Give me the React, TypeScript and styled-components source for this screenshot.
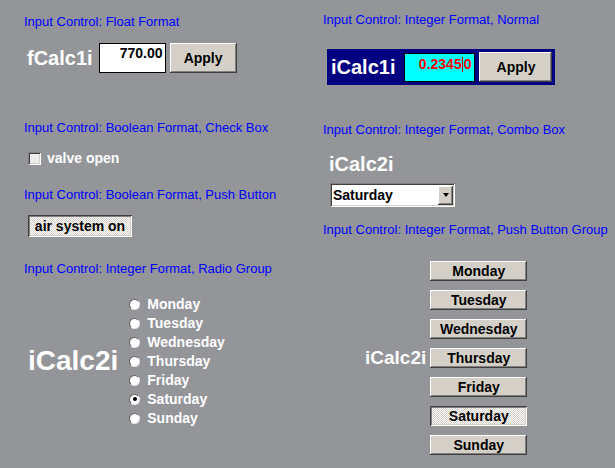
import styled, { createGlobalStyle, css } from "styled-components";

const GlobalStyle = createGlobalStyle`
  html, body {
    margin: 0;
    padding: 0;
    background: #939599;
  }
  body {
    font-family: "Liberation Sans", Arial, sans-serif;
    overflow: hidden;
  }
`;

const raised = css`
  background: #d4d0c8;
  box-shadow: inset -1px -1px #404040, inset 1px 1px #ffffff,
    inset -2px -2px #808080, inset 2px 2px #d4d0c8;
`;

const pressed = css`
  background-color: #ffffff;
  background-image: repeating-conic-gradient(#d4d0c8 0 25%, #ffffff 0 50%);
  background-size: 2px 2px;
  box-shadow: inset 1px 1px #404040, inset -1px -1px #ffffff,
    inset 2px 2px #808080, inset -2px -2px #d4d0c8;
`;

const sunken = css`
  box-shadow: inset 1px 1px #808080, inset -1px -1px #ffffff,
    inset 2px 2px #404040, inset -2px -2px #d4d0c8;
`;

const Page = styled.div`
  display: flex;
  width: 615px;
  height: 468px;
  background: #939599;
`;

const LeftColumn = styled.div`
  display: flex;
  flex-direction: column;
  align-items: flex-start;
  width: 323px;
  padding-left: 24px;
  box-sizing: border-box;
`;

const RightColumn = styled.div`
  display: flex;
  flex-direction: column;
  align-items: flex-start;
`;

const Caption = styled.div<{ $top: number }>`
  margin-top: ${(p) => p.$top}px;
  font-size: 13px;
  line-height: 15px;
  color: #0000ff;
  white-space: nowrap;
`;

const CalcName = styled.span<{ $size: number }>`
  font-size: ${(p) => p.$size}px;
  line-height: ${(p) => Math.round(p.$size * 1.15)}px;
  font-weight: bold;
  color: #ffffff;
  white-space: nowrap;
`;

const FloatRow = styled.div`
  display: flex;
  align-items: center;
  margin: 14px 0 0 3px;
  height: 30px;
  ${CalcName} {
    margin-right: 6px;
  }
`;

const ValueBox = styled.div<{ $cyan?: boolean }>`
  box-sizing: border-box;
  width: ${(p) => (p.$cyan ? 71 : 67)}px;
  height: ${(p) => (p.$cyan ? 29 : 30)}px;
  border: 1px solid #000000;
  background: ${(p) => (p.$cyan ? "#00ffff" : "#ffffff")};
  color: ${(p) => (p.$cyan ? "#ff0000" : "#000000")};
  padding: ${(p) => (p.$cyan ? "2px 3px 0 0" : "1px 2px 0 0")};
  font-size: 14px;
  line-height: 16px;
  font-weight: bold;
  text-align: right;
  white-space: nowrap;
`;

const Caret = styled.span`
  display: inline-block;
  width: 1px;
  height: 15px;
  margin: 0 1px 0 0;
  vertical-align: -3px;
  background: #b00000;
`;

const ApplyButton = styled.div<{ $width: number }>`
  ${raised};
  box-sizing: border-box;
  width: ${(p) => p.$width}px;
  height: 30px;
  margin-left: 4px;
  display: flex;
  align-items: center;
  justify-content: center;
  font-size: 14px;
  font-weight: bold;
  color: #000000;
`;

const CheckRow = styled.div`
  display: flex;
  align-items: center;
  gap: 6px;
  height: 16px;
  margin: 15px 0 0 4px;
`;

const CheckBox = styled.div`
  ${sunken};
  width: 13px;
  height: 13px;
  background: #ececec;
`;

const WhiteLabel = styled.span`
  font-size: 14px;
  line-height: 16px;
  font-weight: bold;
  color: #ffffff;
  white-space: nowrap;
`;

const ToggleButton = styled.div`
  ${pressed};
  box-sizing: border-box;
  width: 104px;
  height: 22px;
  margin: 13px 0 0 4px;
  display: flex;
  align-items: center;
  justify-content: center;
  font-size: 14px;
  font-weight: bold;
  color: #000000;
`;

const RadioSection = styled.div`
  display: flex;
  align-items: center;
  margin: 19px 0 0 4px;
  ${CalcName} {
    margin-right: 11px;
  }
`;

const RadioList = styled.div`
  display: flex;
  flex-direction: column;
`;

const RadioRow = styled.div`
  display: flex;
  align-items: center;
  gap: 7px;
  height: 19px;
`;

const RadioDot = styled.div<{ $checked?: boolean }>`
  position: relative;
  box-sizing: border-box;
  width: 11px;
  height: 11px;
  border-radius: 50%;
  background: #ffffff;
  border: 1px solid;
  border-color: #606060 #e8e8e8 #e8e8e8 #606060;
  &::after {
    content: "";
    display: ${(p) => (p.$checked ? "block" : "none")};
    position: absolute;
    left: 2.5px;
    top: 2.5px;
    width: 4px;
    height: 4px;
    border-radius: 50%;
    background: #000000;
  }
`;

const NavyPanel = styled.div`
  display: flex;
  align-items: center;
  box-sizing: border-box;
  height: 36px;
  margin: 22px 0 0 4px;
  padding: 0 3px 0 4px;
  background: #000080;
  ${CalcName} {
    margin-right: 9px;
  }
`;

const ComboName = styled(CalcName)`
  margin: 16px 0 0 6px;
`;

const Combo = styled.div`
  ${sunken};
  position: relative;
  box-sizing: border-box;
  width: 125px;
  height: 24px;
  margin: 7px 0 0 7px;
  padding: 0 2px 0 3px;
  display: flex;
  align-items: center;
  justify-content: space-between;
  background: #ffffff;
  font-size: 14px;
  font-weight: bold;
  color: #000000;
`;

const ComboArrow = styled.div`
  ${raised};
  box-sizing: border-box;
  width: 15px;
  height: 19px;
  display: flex;
  align-items: center;
  justify-content: center;
  &::before {
    content: "";
    border-left: 3.5px solid transparent;
    border-right: 3.5px solid transparent;
    border-top: 4px solid #000000;
  }
`;

const PushSection = styled.div`
  display: flex;
  align-items: center;
  gap: 4px;
  margin: 24.5px 0 0 42px;
`;

const PushList = styled.div`
  display: flex;
  flex-direction: column;
  gap: 9px;
`;

const DayButton = styled.div<{ $down?: boolean }>`
  ${(p) => (p.$down ? pressed : raised)};
  box-sizing: border-box;
  width: 97px;
  height: 20px;
  display: flex;
  align-items: center;
  justify-content: center;
  font-size: 14px;
  font-weight: bold;
  color: #000000;
`;

const days = ["Monday", "Tuesday", "Wednesday", "Thursday", "Friday", "Saturday", "Sunday"];
const selectedDay = "Saturday";

export default function App() {
  return (
    <>
      <GlobalStyle />
      <Page>
        <LeftColumn>
          <Caption $top={14}>Input Control: Float Format</Caption>
          <FloatRow>
            <CalcName $size={20}>fCalc1i</CalcName>
            <ValueBox>770.00</ValueBox>
            <ApplyButton $width={67}>Apply</ApplyButton>
          </FloatRow>

          <Caption $top={47}>Input Control: Boolean Format, Check Box</Caption>
          <CheckRow>
            <CheckBox />
            <WhiteLabel>valve open</WhiteLabel>
          </CheckRow>

          <Caption $top={21}>Input Control: Boolean Format, Push Button</Caption>
          <ToggleButton>air system on</ToggleButton>

          <Caption $top={23.5}>Input Control: Integer Format, Radio Group</Caption>
          <RadioSection>
            <CalcName $size={28}>iCalc2i</CalcName>
            <RadioList>
              {days.map((d) => (
                <RadioRow key={d}>
                  <RadioDot $checked={d === selectedDay} />
                  <WhiteLabel>{d}</WhiteLabel>
                </RadioRow>
              ))}
            </RadioList>
          </RadioSection>
        </LeftColumn>

        <RightColumn>
          <Caption $top={12}>Input Control: Integer Format, Normal</Caption>
          <NavyPanel>
            <CalcName $size={20}>iCalc1i</CalcName>
            <ValueBox $cyan>
              0.2345<Caret />0
            </ValueBox>
            <ApplyButton $width={73}>Apply</ApplyButton>
          </NavyPanel>

          <Caption $top={37}>Input Control: Integer Format, Combo Box</Caption>
          <ComboName $size={20}>iCalc2i</ComboName>
          <Combo>
            <span>Saturday</span>
            <ComboArrow />
          </Combo>

          <Caption $top={14.5}>Input Control: Integer Format, Push Button Group</Caption>
          <PushSection>
            <CalcName $size={19}>iCalc2i</CalcName>
            <PushList>
              {days.map((d) => (
                <DayButton key={d} $down={d === selectedDay}>
                  {d}
                </DayButton>
              ))}
            </PushList>
          </PushSection>
        </RightColumn>
      </Page>
    </>
  );
}
